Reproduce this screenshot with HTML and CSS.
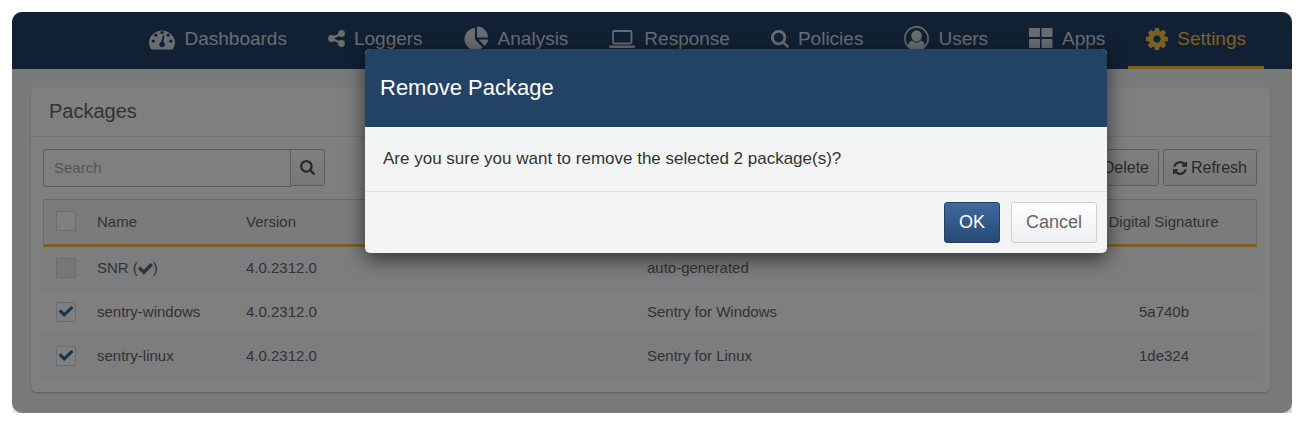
FILE: index.html
```html
<!DOCTYPE html>
<html lang="en">

<head>
    <meta charset="UTF-8">
    <meta name="viewport" content="width=device-width, initial-scale=1.0">
    <title>Packages</title>
    <link rel="stylesheet" href="styles.css">
</head>

<body>

    <div class="app">
        <nav class="navbar">
            <a href="#">
                <svg width="26" height="26" viewBox="0 0 26 26">
                    <path fill-rule="evenodd" d="M1.8 22.7A13 12 0 1 1 24.2 22.7Q23.8 23.5 23 23.5H3Q2.200 23.5 1.8 22.7zM13 5a1.600 1.600 0 1 0 .01 0zM6.800 7.500a1.600 1.600 0 1 0 .01 0zM19.200 7.500a1.600 1.600 0 1 0 .01 0zM4.200 13.500a1.600 1.600 0 1 0 .01 0zM21.800 13.500a1.600 1.600 0 1 0 .01 0zM15.500 9.500L14.300 16A2.800 2.800 0 1 1 12 16L14.200 9.100z" />
                </svg>
                Dashboards
            </a>
            <a href="#">
                <svg width="17" height="26" viewBox="0 0 17 26">
                    <circle cx="13.5" cy="7.5" r="3.4" />
                    <circle cx="3.5" cy="12.5" r="3.4" />
                    <circle cx="13.5" cy="17.5" r="3.4" />
                    <path d="M13.5 7.5L3.5 12.5L13.5 17.5" fill="none" stroke="currentColor" stroke-width="2.2" />
                </svg>
                Loggers
            </a>
            <a href="#">
                <svg width="25" height="26" viewBox="0 0 25 26">
                    <path d="M11 2V13.500L18.5 21.5A11 11 0 1 1 11 2z" />
                    <path d="M13 0.500A11 11 0 0 1 24 11.500H13z" />
                    <path d="M14.500 13.500H24.500A11 11 0 0 1 20.500 20z" />
                </svg>
                Analysis
            </a>
            <a href="#">
                <svg width="26" height="26" viewBox="0 0 26 26">
                    <rect x="4" y="5" width="18.5" height="12.5" rx="1.5" fill="none" stroke="currentColor" stroke-width="1.8" />
                    <path d="M0 19.5H26V20.5Q26 22 24 22H2Q0 22 0 20.500z" />
                </svg>
                Response
            </a>
            <a href="#">
                <svg width="18" height="26" viewBox="64 -241 1664 2403">
                    <path d="M1216 832q0-185-131.5-316.5t-316.5-131.5-316.5 131.5-131.5 316.5 131.5 316.5 316.5 131.5 316.5-131.5 131.5-316.5zm512 832q0 52-38 90t-90 38q-54 0-90-38l-343-342q-179 124-399 124-143 0-273.5-55.5t-225-150-150-225-55.5-273.5 55.5-273.5 150-225 225-150 273.5-55.5 273.5 55.5 225 150 150 225 55.5 273.5q0 220-124 399l343 343q37 37 37 90z" />
                </svg>
                Policies
            </a>
            <a href="#">
                <svg width="25" height="26" viewBox="0 0 25 26">
                    <circle cx="12.5" cy="12.5" r="11.6" fill="none" stroke="currentColor" stroke-width="1.6" />
                    <ellipse cx="12.5" cy="10" rx="5.3" ry="5.8" />
                    <path d="M4 20Q4.5 15.5 8 14.5Q12.5 19 17 14.5Q20.5 15.5 21 20Q17.5 24 12.5 24T4 20z" />
                </svg>
                Users
            </a>
            <a href="#">
                <svg width="24" height="26" viewBox="0 0 24 26">
                    <rect x="0" y="2" width="11" height="9" rx="1" />
                    <rect x="12.5" y="2" width="11" height="9" rx="1" />
                    <rect x="0" y="13" width="11" height="9" rx="1" />
                    <rect x="12.5" y="13" width="11" height="9" rx="1" />
                </svg>
                Apps
            </a>
            <a href="#" class="active">
                <svg width="22" height="26" viewBox="128 -12 1536 1816">
                    <path d="M1152 896q0-106-75-181t-181-75-181 75-75 181 75 181 181 75 181-75 75-181zm512-109v222q0 12-8 23t-20 13l-185 28q-19 54-39 91 35 50 107 138 10 12 10 25t-9 23q-27 37-99 108t-94 71q-12 0-26-9l-138-108q-44 23-91 38-16 136-29 186-7 28-36 28h-222q-14 0-24.5-8.5t-11.5-21.5l-28-184q-49-16-90-37l-141 107q-10 9-25 9-14 0-25-11-126-114-165-168-7-10-7-23 0-12 8-23 15-21 51-66.5t54-70.5q-27-50-41-99l-183-27q-13-2-21-12.5t-8-23.5v-222q0-12 8-23t19-13l186-28q14-46 39-92-40-57-107-138-10-12-10-24 0-10 9-23 26-36 98.5-107.5t94.5-71.5q13 0 26 10l138 107q44-23 91-38 16-136 29-186 7-28 36-28h222q14 0 24.5 8.5t11.5 21.5l28 184q49 16 90 37l142-107q9-9 24-9 13 0 25 10 129 119 165 170 7 8 7 22 0 12-8 23-15 21-51 66.5t-54 70.5q26 50 41 98l183 28q13 2 21 12.5t8 23.5z" />
                </svg>
                Settings
            </a>
        </nav>

        <div class="panel">
            <h2>Packages</h2>
            <div class="toolbar">
                <div class="search">
                    <input type="text" placeholder="Search" aria-label="Search">
                    <button class="btn" aria-label="Search">
                        <svg width="15" height="15" viewBox="64 128 1664 1664">
                            <path d="M1216 832q0-185-131.5-316.5t-316.5-131.5-316.5 131.5-131.5 316.5 131.5 316.5 316.5 131.5 316.5-131.5 131.5-316.5zm512 832q0 52-38 90t-90 38q-54 0-90-38l-343-342q-179 124-399 124-143 0-273.5-55.5t-225-150-150-225-55.5-273.5 55.5-273.5 150-225 225-150 273.5-55.5 273.5 55.5 225 150 150 225 55.5 273.5q0 220-124 399l343 343q37 37 37 90z" />
                        </svg>
                    </button>
                </div>
                <div class="actions">
                    <button class="btn">Delete</button>
                    <button class="btn">
                        <svg width="14" height="14" viewBox="128 128 1536 1536">
                            <path d="M1639 1056q0 5-1 7-64 268-268 434.5t-478 166.5q-146 0-282.5-55t-243.5-157l-129 129q-19 19-45 19t-45-19-19-45v-448q0-26 19-45t45-19h448q26 0 45 19t19 45-19 45l-137 137q71 66 161 102t187 36q134 0 250-65t186-179q11-17 53-117 8-23 30-23h192q13 0 22.5 9.5t9.5 22.5zm25-800v448q0 26-19 45t-45 19h-448q-26 0-45-19t-19-45 19-45l138-138q-148-137-349-137-134 0-250 65t-186 179q-11 17-53 117-8 23-30 23h-199q-13 0-22.5-9.5t-9.5-22.5v-7q65-268 270-434.5t480-166.5q146 0 284 55.5t245 156.5l130-129q19-19 45-19t45 19 19 45z" />
                        </svg>
                        Refresh
                    </button>
                </div>
            </div>

            <table>
                <thead>
                    <tr>
                        <th class="col-check"><input type="checkbox" aria-label="Select all"></th>
                        <th class="col-name">Name</th>
                        <th class="col-version">Version</th>
                        <th></th>
                        <th class="col-sign">Digital Signature</th>
                    </tr>
                </thead>
                <tbody>
                    <tr>
                        <td><input type="checkbox" aria-label="SNR" disabled></td>
                        <td>SNR <span class="mark">(<svg width="15" height="15" viewBox="100 100 1592 1592"><path d="M1671 566q0 40-28 68l-724 724-136 136q-28 28-68 28t-68-28l-136-136-362-362q-28-28-28-68t28-68l136-136q28-28 68-28t68 28l294 295 656-657q28-28 68-28t68 28l136 136q28 28 28 68z" /></svg>)</span></td>
                        <td>4.0.2312.0</td>
                        <td>auto-generated</td>
                        <td></td>
                    </tr>
                    <tr>
                        <td><input type="checkbox" aria-label="sentry-windows" checked></td>
                        <td>sentry-windows</td>
                        <td>4.0.2312.0</td>
                        <td>Sentry for Windows</td>
                        <td>5a740b</td>
                    </tr>
                    <tr>
                        <td><input type="checkbox" aria-label="sentry-linux" checked></td>
                        <td>sentry-linux</td>
                        <td>4.0.2312.0</td>
                        <td>Sentry for Linux</td>
                        <td>1de324</td>
                    </tr>
                </tbody>
            </table>
        </div>

        <div class="backdrop">
            <div class="modal" role="dialog" aria-labelledby="modal-title">
                <h1 id="modal-title">Remove Package</h1>
                <p>Are you sure you want to remove the selected 2 package(s)?</p>
                <div class="modal-footer">
                    <button class="btn-ok">OK</button>
                    <button class="btn-cancel">Cancel</button>
                </div>
            </div>
        </div>
    </div>

</body>

</html>
```
FILE: styles.css
```css
* {
    box-sizing: border-box;
}

body {
    margin: 12px 23px 23px 12px;
    background-color: white;
    font-family: "Liberation Sans", Arial, sans-serif;
    font-size: 15px;
    color: #666;
}

button,
input {
    font-family: inherit;
}

svg {
    fill: currentColor;
    flex-shrink: 0;
}

.app {
    position: relative;
    overflow: hidden;
    border-radius: 10px;
    padding-bottom: 21px;
    background-color: #f2f5f4;
    box-shadow: 4px 6px 16px rgba(0, 0, 0, 0.25);
}

/* top navigation */

.navbar {
    display: flex;
    justify-content: flex-end;
    gap: 5px;
    height: 57px;
    padding-right: 28px;
    background-color: #224266;
}

.navbar a {
    display: flex;
    align-items: center;
    gap: 9px;
    padding: 0 18px;
    border-bottom: 3px solid transparent;
    font-size: 19px;
    color: #d3d9e0;
    text-decoration: none;
}

.navbar a.active {
    color: #f5c048;
    border-bottom-color: #f5c048;
}

/* packages */

.panel {
    margin: 18px 22px 0 19px;
    padding-bottom: 13px;
    border-radius: 5px;
    background-color: white;
    box-shadow: 0 1px 2px rgba(0, 0, 0, 0.25);
}

.panel h2 {
    margin: 0;
    padding: 0 18px;
    border-bottom: 1px solid #e6e6e6;
    font-size: 20px;
    font-weight: normal;
    line-height: 49px;
}

.toolbar {
    display: flex;
    justify-content: space-between;
    padding: 12px 13px 12px 12px;
}

.search,
.actions {
    display: flex;
}

.actions {
    gap: 4px;
}

.search input {
    width: 248px;
    height: 38px;
    padding: 0 10px 2px;
    border: 1px solid #bbb;
    border-radius: 3px 0 0 3px;
    font-size: 15px;
}

.search input::placeholder {
    color: #aaa;
}

.btn {
    display: flex;
    align-items: center;
    gap: 4px;
    height: 37px;
    padding: 0 9px;
    border: 1px solid #bbb;
    border-radius: 3px;
    background: linear-gradient(white, #eef0f3);
    font-size: 16px;
    color: #555;
}

.search .btn {
    margin-left: -1px;
    border-radius: 0 3px 3px 0;
}

table {
    width: calc(100% - 25px);
    margin-left: 12px;
    border-collapse: separate;
    border-spacing: 0;
    table-layout: fixed;
}

th {
    height: 48px;
    padding: 0 0 2px;
    border-top: 1px solid #d4d4d4;
    border-bottom: 3px solid #f5c048;
    background-color: #f7f7f7;
    font-weight: normal;
    text-align: left;
}

th:first-child {
    border-left: 1px solid #d4d4d4;
}

th:last-child {
    border-right: 1px solid #d4d4d4;
}

td {
    height: 44px;
    padding: 0 0 2px;
    border-bottom: 1px solid #eceef1;
}

tbody tr:nth-child(odd) {
    background-color: #f8fafd;
}

th:last-child,
td:last-child {
    text-align: center;
}

th:nth-child(4),
td:nth-child(4) {
    padding-left: 172px;
}

.col-check {
    width: 54px;
}

.col-name {
    width: 149px;
}

.col-version {
    width: 229px;
}

.col-sign {
    width: 186px;
}

.mark svg {
    vertical-align: -3px;
}

input[type="checkbox"] {
    appearance: none;
    display: grid;
    place-items: center;
    width: 20px;
    height: 20px;
    margin: 0 0 0 13px;
    border: 1px solid #d8d8d8;
    background-color: white;
}

th input[type="checkbox"] {
    margin-left: 12px;
}

input[type="checkbox"]:disabled {
    background-color: #eee;
}

input[type="checkbox"]:checked::before {
    content: "";
    width: 15px;
    height: 12px;
    background-color: #2a6a94;
    clip-path: polygon(0 50%, 16% 32%, 38% 60%, 84% 4%, 100% 20%, 38% 96%);
}

/* dialog */

.backdrop {
    position: absolute;
    inset: 0;
    padding: 37px 185px 0 353px;
    background-color: rgba(0, 0, 0, 0.5);
}

.modal {
    overflow: hidden;
    border-radius: 5px;
    background-color: #f3f5f4;
    box-shadow: 0 6px 20px rgba(0, 0, 0, 0.6);
}

.modal h1 {
    margin: 0;
    padding: 0 15px;
    background-color: #224266;
    font-size: 22px;
    font-weight: normal;
    line-height: 78px;
    color: white;
}

.modal p {
    margin: 0;
    padding: 0 18px;
    font-size: 17px;
    line-height: 64px;
    color: #333;
}

.modal-footer {
    display: flex;
    justify-content: flex-end;
    gap: 11px;
    padding: 10px;
    border-top: 1px solid #dfe1e0;
}

.modal-footer button {
    height: 41px;
    padding: 0 14px;
    border: 1px solid #ccc;
    border-radius: 3px;
    font-size: 18px;
}

.modal-footer .btn-ok {
    border-color: #224266;
    background: linear-gradient(#40699c, #264a75);
    color: white;
}

.modal-footer .btn-cancel {
    background: linear-gradient(white, #eceff3);
    color: #666;
}
```
